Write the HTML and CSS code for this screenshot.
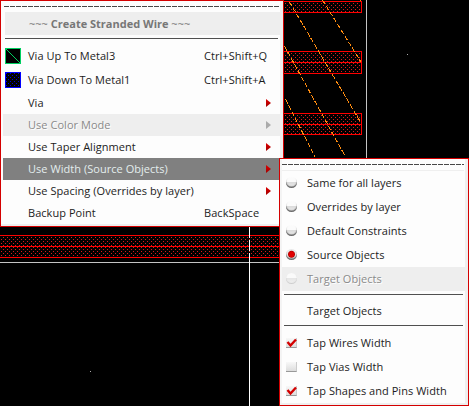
FILE: index.html
```html
<!DOCTYPE html>
<html lang="en">
<head>
<meta charset="utf-8">
<title>Create Stranded Wire</title>
<link rel="stylesheet" href="styles.css">
</head>
<body>
<svg class="layout" width="469" height="406" viewBox="0 0 469 406" shape-rendering="crispEdges">
  <defs>
    <pattern id="dots" width="4" height="4" patternUnits="userSpaceOnUse">
      <path fill="#d81c1c" d="M3 1h1v1h-1zM1 3h1v1h-1z"/>
    </pattern>
    <pattern id="blue" width="4" height="4" patternUnits="userSpaceOnUse">
      <path fill="#0000d8" d="M1 1h1v1h-1zM3 3h1v1h-1z"/>
    </pattern>
  </defs>
  <g fill="url(#dots)" stroke="#f00">
    <path d="M270.500 1.500H361.500V12.500H270.500zM270.500 51.500H361.500V62.500H270.500zM270.500 62.500H361.500V73.500H270.500zM270.500 113.500H361.500V124.500H270.500zM270.500 124.500H361.500V134.500H270.500zM-2 235.500H300V246.500H-2zM-2 246.500H300V257.500H-2z"/>
  </g>
  <g stroke="#ff8c10" stroke-dasharray="5 2">
    <path d="M289.500 2L361 123M322.500 0L361 62M284.500 46L345 156M285.500 99L315 157M360.500 0v1"/>
  </g>
  <path stroke="#c4c4c4" d="M366.500 0V160M0 262.500H280"/>
  <path stroke="#fff" stroke-dasharray="11 2" d="M249.500 227V262"/>
  <path stroke="#fff" d="M249.500 262V406"/>
  <path fill="#aaa" d="M407 54h1v1h-1zM90 371h1v1h-1z"/>
</svg>

<div class="menu main">
  <div class="tear"></div>
  <div class="title"><span>~~~ <b>Create Stranded Wire</b> ~~~</span></div>
  <div class="rule"></div>
  <div class="item tall">
    <svg class="swatch" width="16" height="16" shape-rendering="crispEdges"><path fill="#000" stroke="#00cf60" d="M.5.5h15v15H.5z"/><path stroke="#00cf60" d="M1 1l14 14"/></svg>
    <span class="label">Via Up To Metal3</span><span class="key">Ctrl+Shift+Q</span>
  </div>
  <div class="item tall">
    <svg class="swatch" width="16" height="16" shape-rendering="crispEdges"><path fill="#000" d="M0 0h16v16H0z"/><path fill="url(#blue)" stroke="#00f" d="M.5.5h15v15H.5z"/></svg>
    <span class="label">Via Down To Metal1</span><span class="key">Ctrl+Shift+A</span>
  </div>
  <div class="item"><span class="label">Via</span><i class="arrow"></i></div>
  <div class="item disabled"><span class="label">Use Color Mode</span><i class="arrow"></i></div>
  <div class="item"><span class="label">Use Taper Alignment</span><i class="arrow"></i></div>
  <div class="item active"><span class="label">Use Width (Source Objects)</span><i class="arrow"></i></div>
  <div class="item"><span class="label">Use Spacing (Overrides by layer)</span><i class="arrow"></i></div>
  <div class="item"><span class="label">Backup Point</span><span class="key">BackSpace</span></div>
</div>

<div class="menu sub">
  <div class="tear"></div>
  <div class="item"><i class="radio"></i><span class="label">Same for all layers</span></div>
  <div class="item"><i class="radio"></i><span class="label">Overrides by layer</span></div>
  <div class="item"><i class="radio"></i><span class="label">Default Constraints</span></div>
  <div class="item"><i class="radio on"></i><span class="label">Source Objects</span></div>
  <div class="item disabled"><i class="radio"></i><span class="label">Target Objects</span></div>
  <div class="rule"></div>
  <div class="item"><span class="label">Target Objects</span></div>
  <div class="rule second"></div>
  <div class="item"><i class="check"><svg width="11" height="11"><path d="M1.500 4L4.500 7.500L10 1.500"/></svg></i><span class="label">Tap Wires Width</span></div>
  <div class="item"><i class="check"></i><span class="label">Tap Vias Width</span></div>
  <div class="item"><i class="check"><svg width="11" height="11"><path d="M1.500 4L4.500 7.500L10 1.500"/></svg></i><span class="label">Tap Shapes and Pins Width</span></div>
</div>
</body>
</html>
```
FILE: styles.css
```css
* { box-sizing: border-box; }
body {
  margin: 0;
  width: 469px;
  height: 406px;
  position: relative;
  overflow: hidden;
  background: #000;
  font: 11px/22px "Open Sans", sans-serif;
  color: #1c1c1c;
}
.layout { display: block; }
.menu {
  position: absolute;
  background: #fdfdfd;
  border: 1px solid #d40000;
  white-space: nowrap;
}
.main {
  left: 0;
  top: 0;
  width: 284px;
  height: 227px;
  padding: 0 3px 0 2px;
  box-shadow: inset -3px -2px #efefef;
}
.sub {
  left: 279px;
  top: 158px;
  width: 190px;
  height: 248px;
  padding: 0 3px 0 2px;
  box-shadow: inset -3px -2px #efefef, inset 2px 0 #f4f4f4;
}
.tear {
  height: 11px;
  margin: 0 1px;
  background: repeating-linear-gradient(90deg, #484848 0 5px, transparent 5px 6px) 0 5px / 100% 1px no-repeat;
}
.sub .tear { height: 12px; border-bottom: 1px solid #efefef; margin: 0 1px 0 0; }
.title {
  height: 23px;
  line-height: 23px;
  padding-left: 24px;
  margin-left: 2px;
  background: #eee;
  color: #777;
}
.rule { height: 1px; background: #505050; margin: 3px 2px 4px; }
.main .rule { margin-bottom: 5px; }
.second { margin: 2px 2px 5px; }
.item {
  height: 22px;
  padding-left: 25px;
  position: relative;
  display: flex;
  align-items: center;
}
.tall, .sub .item { height: 24px; }
.label { letter-spacing: 0.04px; }
.swatch { position: absolute; left: 2px; top: 4px; }
.key { position: absolute; left: 201px; top: 0; letter-spacing: 0.06px; }
.tall .key { top: 1px; }
.disabled { background: #eee; color: #8a8a8a; text-shadow: 1px 1px #fff; }
.active { background: #808080; color: #e4eeee; }
.arrow {
  position: absolute;
  left: 263px;
  top: 7px;
  width: 5px;
  height: 8px;
  background: linear-gradient(#e00000, #a00000);
  clip-path: polygon(0 0, 100% 50%, 0 100%);
}
.disabled .arrow { background: #aaa; }
.radio {
  position: absolute;
  left: 4px;
  top: 6px;
  width: 11px;
  height: 11px;
  border-radius: 50%;
  background: linear-gradient(#fbfbfb 45%, #dcdcdc 50%, #eee);
  box-shadow: inset 0 -1.500px 1px #666;
}
.on { background: radial-gradient(circle at 50% 48%, #e00000 0 2.500px, #b00 3px, #e8e8e8 4px); }
.disabled .radio { background: linear-gradient(#fafafa 45%, #e6e6e6 50%, #f2f2f2); box-shadow: inset 0 -1px 1px #ccc; }
.check {
  position: absolute;
  left: 4px;
  top: 7px;
  width: 11px;
  height: 10px;
  background: linear-gradient(#f8f8f8, #ddd);
  border-bottom: 1px solid #999;
  border-right: 1px solid #ccc;
}
.check svg { display: block; }
.check path { fill: none; stroke: #d40000; stroke-width: 2.400; }
```
